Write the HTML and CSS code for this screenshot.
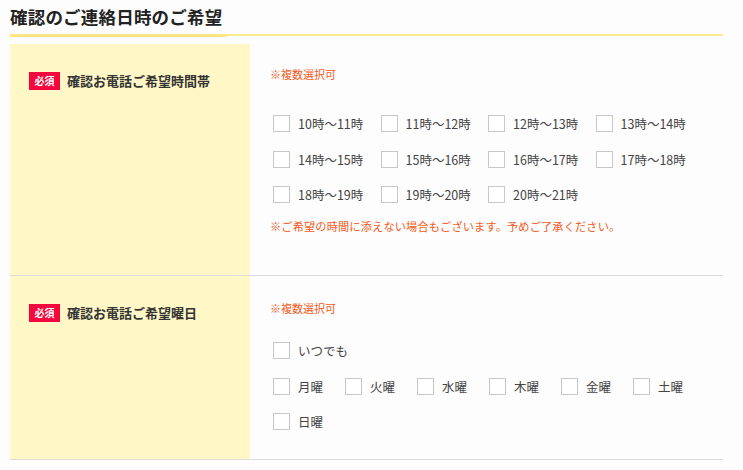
FILE: index.html
```html
<!DOCTYPE html>
<html lang="ja">
<head>
<meta charset="utf-8">
<link rel="stylesheet" href="styles.css">
</head>
<body>
<div class="page">
  <h2 class="title">確認のご連絡日時のご希望</h2>
  <div class="table">
    <div class="row">
      <div class="th"><span class="badge">必須</span><span class="label">確認お電話ご希望時間帯</span></div>
      <div class="td td-times">
        <p class="hint">※複数選択可</p>
        <div class="checks times">
          <label class="check"><span class="box"></span>10時〜11時</label>
          <label class="check"><span class="box"></span>11時〜12時</label>
          <label class="check"><span class="box"></span>12時〜13時</label>
          <label class="check"><span class="box"></span>13時〜14時</label>
          <label class="check"><span class="box"></span>14時〜15時</label>
          <label class="check"><span class="box"></span>15時〜16時</label>
          <label class="check"><span class="box"></span>16時〜17時</label>
          <label class="check"><span class="box"></span>17時〜18時</label>
          <label class="check"><span class="box"></span>18時〜19時</label>
          <label class="check"><span class="box"></span>19時〜20時</label>
          <label class="check"><span class="box"></span>20時〜21時</label>
        </div>
        <p class="note">※ご希望の時間に添えない場合もございます。予めご了承ください。</p>
      </div>
    </div>
    <div class="row">
      <div class="th th-days"><span class="badge">必須</span><span class="label">確認お電話ご希望曜日</span></div>
      <div class="td td-days">
        <p class="hint">※複数選択可</p>
        <div class="checks days">
          <label class="check wide"><span class="box"></span>いつでも</label>
          <label class="check"><span class="box"></span>月曜</label>
          <label class="check"><span class="box"></span>火曜</label>
          <label class="check"><span class="box"></span>水曜</label>
          <label class="check"><span class="box"></span>木曜</label>
          <label class="check"><span class="box"></span>金曜</label>
          <label class="check"><span class="box"></span>土曜</label>
          <label class="check"><span class="box"></span>日曜</label>
        </div>
      </div>
    </div>
  </div>
</div>
</body>
</html>
```
FILE: styles.css
```css
* { box-sizing: border-box; }
html, body {
  margin: 0;
  padding: 0;
  background: #fdfdfd;
  font-family: "Noto Sans CJK JP", "Noto Sans", sans-serif;
  color: #333;
}
.page {
  padding: 0 10px;
  width: 733px;
}
.title {
  position: relative;
  margin: 0 0 8px;
  padding: 5px 0 5px;
  font-size: 17.5px;
  line-height: 24px;
  font-weight: 700;
  color: #222;
  border-bottom: 2px solid #fdea8c;
  letter-spacing: 0.2px;
}
.title::after {
  content: "";
  position: absolute;
  left: 0;
  bottom: -3px;
  width: 217px;
  height: 3px;
  background: #fde784;
}
.table {
  display: flex;
  flex-direction: column;
}
.row {
  display: flex;
  border-bottom: 1px solid #dcdcdc;
}
.th {
  width: 240px;
  flex: none;
  background: #fff7c6;
  padding: 28px 0 0 19px;
  display: flex;
  align-self: stretch;
  align-items: flex-start;
  gap: 7px;
}
.th-days { padding-top: 28px; }
.badge {
  display: inline-flex;
  align-items: center;
  justify-content: center;
  width: 31px;
  height: 18px;
  background: #f5063c;
  color: #fff;
  font-size: 10px;
  font-weight: 700;
  line-height: 1;
}
.label {
  font-size: 13px;
  font-weight: 700;
  line-height: 18px;
  color: #333;
}
.td {
  flex: 1;
  padding: 22px 0 0 20px;
}
.td-times { padding-bottom: 41px; }
.td-days { padding-top: 24px; padding-bottom: 29px; }
.hint, .note {
  margin: 0;
  font-size: 11px;
  line-height: 16px;
  color: #f25a22;
}
.note { font-size: 11.2px; letter-spacing: 0.15px; margin-top: 15px; }
.checks {
  display: flex;
  flex-wrap: wrap;
  row-gap: 18.5px;
  padding-left: 3px;
}
.times { margin-top: 33px; }
.days { margin-top: 26px; }
.check {
  display: flex;
  align-items: center;
  gap: 8px;
  height: 17px;
  font-size: 12.5px;
  color: #444;
}
.times .check { width: 107.5px; }
.days .check { width: 72px; }
.days .check.wide { width: 100%; }
.box {
  width: 17px;
  height: 17px;
  flex: none;
  border: 1px solid #c8c8c8;
  background: #fff;
}
```
